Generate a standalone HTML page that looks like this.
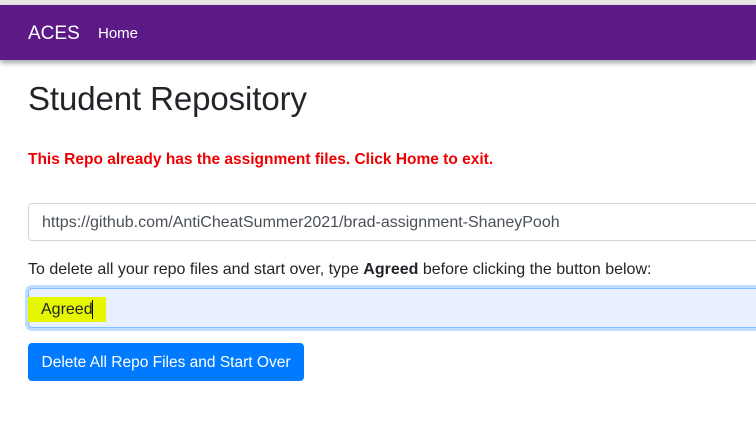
<!DOCTYPE html>
<html><head><style>
body{margin:0;width:756px;height:431px;overflow:hidden;background:#fff;font-family:"Liberation Sans",sans-serif;color:#212529;position:relative}
.top{position:absolute;left:0;top:0;width:756px;height:5px;background:#e6e6e6}
.nav{position:absolute;left:0;top:5px;width:756px;height:55px;background:#5b1a86;box-shadow:0 3px 5px rgba(0,0,0,.35)}
.brand{position:absolute;left:28px;top:18px;color:#fff;font-size:19px}
.home{position:absolute;left:98px;top:20px;color:#fff;font-size:15px}
h1{position:absolute;left:28px;top:80px;margin:0;font-size:33px;font-weight:500;letter-spacing:-.1px}
.err{position:absolute;left:28px;top:151px;color:#e00;font-weight:bold;font-size:15.5px}
.in{position:absolute;left:28px;width:740px;box-sizing:border-box;border:1px solid #ced4da;border-radius:4px;font-size:16px;padding-left:13px}
.i1{top:203px;height:38px;line-height:38px;color:#495057}
.lab{position:absolute;left:28px;top:261px;font-size:16px}
.i2{top:288px;height:40px;line-height:38px;background:#e8f0fe;border-color:#80bdff;box-shadow:0 0 0 3px rgba(0,123,255,.25)}
.hl{position:absolute;left:28px;top:297px;width:78px;height:25px;background:#e6f500}
.txt{position:absolute;left:41px;top:301px;font-size:16px;color:#212529}
.cur{position:absolute;left:92px;top:300px;width:1px;height:19px;background:#000}
.btn{position:absolute;left:28px;top:343px;width:276px;height:38px;background:#007bff;border-radius:4px;color:#fff;font-size:15.5px;line-height:40px;text-align:center}
</style></head><body>
<div class="top"></div>
<div class="nav"><span class="brand">ACES</span><span class="home">Home</span></div>
<h1>Student Repository</h1>
<div class="err">This Repo already has the assignment files. Click Home to exit.</div>
<div class="in i1">https://github.com/AntiCheatSummer2021/brad-assignment-ShaneyPooh</div>
<div class="lab">To delete all your repo files and start over, type <b>Agreed</b> before clicking the button below:</div>
<div class="in i2"></div>
<div class="hl"></div>
<div class="txt">Agreed</div>
<div class="cur"></div>
<div class="btn">Delete All Repo Files and Start Over</div>
</body></html>
